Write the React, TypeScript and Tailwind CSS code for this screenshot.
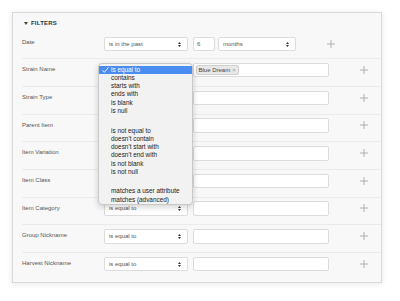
const FONT = { fontFamily: '"Liberation Sans", Arial, sans-serif' };

// rows under the open menu keep their select but it is hidden by the menu
const rows = [
  { label: 'Strain Name', tag: 'Blue Dream', covered: true },
  { label: 'Strain Type', covered: true },
  { label: 'Parent Item', covered: true },
  { label: 'Item Variation', covered: true },
  { label: 'Item Class', covered: true },
  { label: 'Item Category' },
  { label: 'Group Nickname' },
  { label: 'Harvest Nickname' },
];

const menu: (string | null)[] = [
  'is equal to',
  'contains',
  'starts with',
  'ends with',
  'is blank',
  'is null',
  null,
  'is not equal to',
  "doesn't contain",
  "doesn't start with",
  "doesn't end with",
  'is not blank',
  'is not null',
  null,
  'matches a user attribute',
  'matches (advanced)',
];

function Arrows() {
  return (
    <svg width="3" height="5" viewBox="0 0 3 5" className="shrink-0">
      <path d="M0 2 L1.5 0 L3 2 Z M0 3 L1.5 5 L3 3 Z" fill="#333" />
    </svg>
  );
}

function Plus({ className }: { className?: string }) {
  return (
    <svg width="8" height="8" viewBox="0 0 8 8" className={className}>
      <path d="M4 0 V8 M0 4 H8" stroke="#a0a0a0" strokeWidth="0.8" />
    </svg>
  );
}

function Select({ value, width }: { value: string; width: string }) {
  return (
    <div
      className={`flex h-[14.5px] ${width} items-center justify-between rounded-[2px] border border-[#dcdcdc] bg-white pl-[4px] pr-[6px] text-[6px] text-[#555]`}
    >
      <span>{value}</span>
      <Arrows />
    </div>
  );
}

export default function App() {
  return (
    <div className="relative h-[301px] w-[400px] bg-white" style={FONT}>
      <div className="absolute left-[12px] top-[12px] h-[271px] w-[370px] border border-[#d9d9d9] bg-[#f8f8f8] shadow-[0_1px_6px_rgba(0,0,0,0.1)]">
        <div className="ml-[11px] flex h-[18.5px] items-center gap-[3px] pt-[2.5px]">
          <svg width="4" height="3" viewBox="0 0 4 3">
            <path d="M0 0 H4 L2 3 Z" fill="#444" />
          </svg>
          <span className="text-[6px] font-bold tracking-[0.2px] text-[#333]">FILTERS</span>
        </div>

        <div className="ml-[9px] flex h-[26.8px]">
          <div className="w-[82px] pt-[6.5px] text-[6px] leading-[8px] text-[#555]">Date</div>
          <div className="mt-[5.3px] flex items-start">
            <Select value="is in the past" width="w-[84px]" />
            <div className="ml-[5px] flex h-[14.5px] w-[22px] items-center rounded-[2px] border border-[#dcdcdc] bg-white pl-[3px] text-[6px] text-[#555]">
              6
            </div>
            <div className="ml-[3px]">
              <Select value="months" width="w-[78px]" />
            </div>
            <Plus className="ml-[31px] mt-[3px]" />
          </div>
        </div>

        {rows.map((r) => (
          <div key={r.label} className="ml-[9px] flex h-[27.7px] border-t border-[#ebebeb]">
            <div className="w-[82px] pt-[6px] text-[6px] leading-[8px] text-[#555]">{r.label}</div>
            <div className="mt-[3.7px] flex items-start">
              <Select value={r.covered ? '' : 'is equal to'} width="w-[84px]" />
              <div className="ml-[5px] flex h-[14.5px] w-[136px] items-center rounded-[2px] border border-[#dcdcdc] bg-white pl-[1.5px]">
                {r.tag && (
                  <span className="flex h-[9.5px] items-center gap-[2px] rounded-[2px] border border-[#d0d0d0] bg-[#e8e8e8] px-[2px] text-[6px] text-[#444]">
                    {r.tag}
                    <span className="text-[6px] text-[#999]">×</span>
                  </span>
                )}
              </div>
              <Plus className="ml-[31px] mt-[3px]" />
            </div>
          </div>
        ))}
      </div>

      <div className="absolute left-[98px] top-[63px] h-[142px] w-[95px] rounded-[4px] border border-[#c8c8c8] bg-[#f2f2f2] pt-[1.7px] shadow-[0_2px_6px_rgba(0,0,0,0.18)]">
        {menu.map((m, i) =>
          m === null ? (
            <div key={i} className="h-[11.3px]" />
          ) : (
            <div
              key={i}
              className={`relative flex h-[8.27px] items-center pl-[12px] text-[6.4px] leading-none ${
                i === 0 ? 'bg-[#4a8df0] text-white' : 'text-[#222]'
              }`}
            >
              {i === 0 && (
                <svg width="7" height="6" viewBox="0 0 7 6" className="absolute left-[2.5px]">
                  <path d="M0.6 3.3 L2.4 5.3 L6.4 0.4" stroke="white" strokeWidth="0.9" fill="none" />
                </svg>
              )}
              {m}
            </div>
          )
        )}
      </div>
    </div>
  );
}
